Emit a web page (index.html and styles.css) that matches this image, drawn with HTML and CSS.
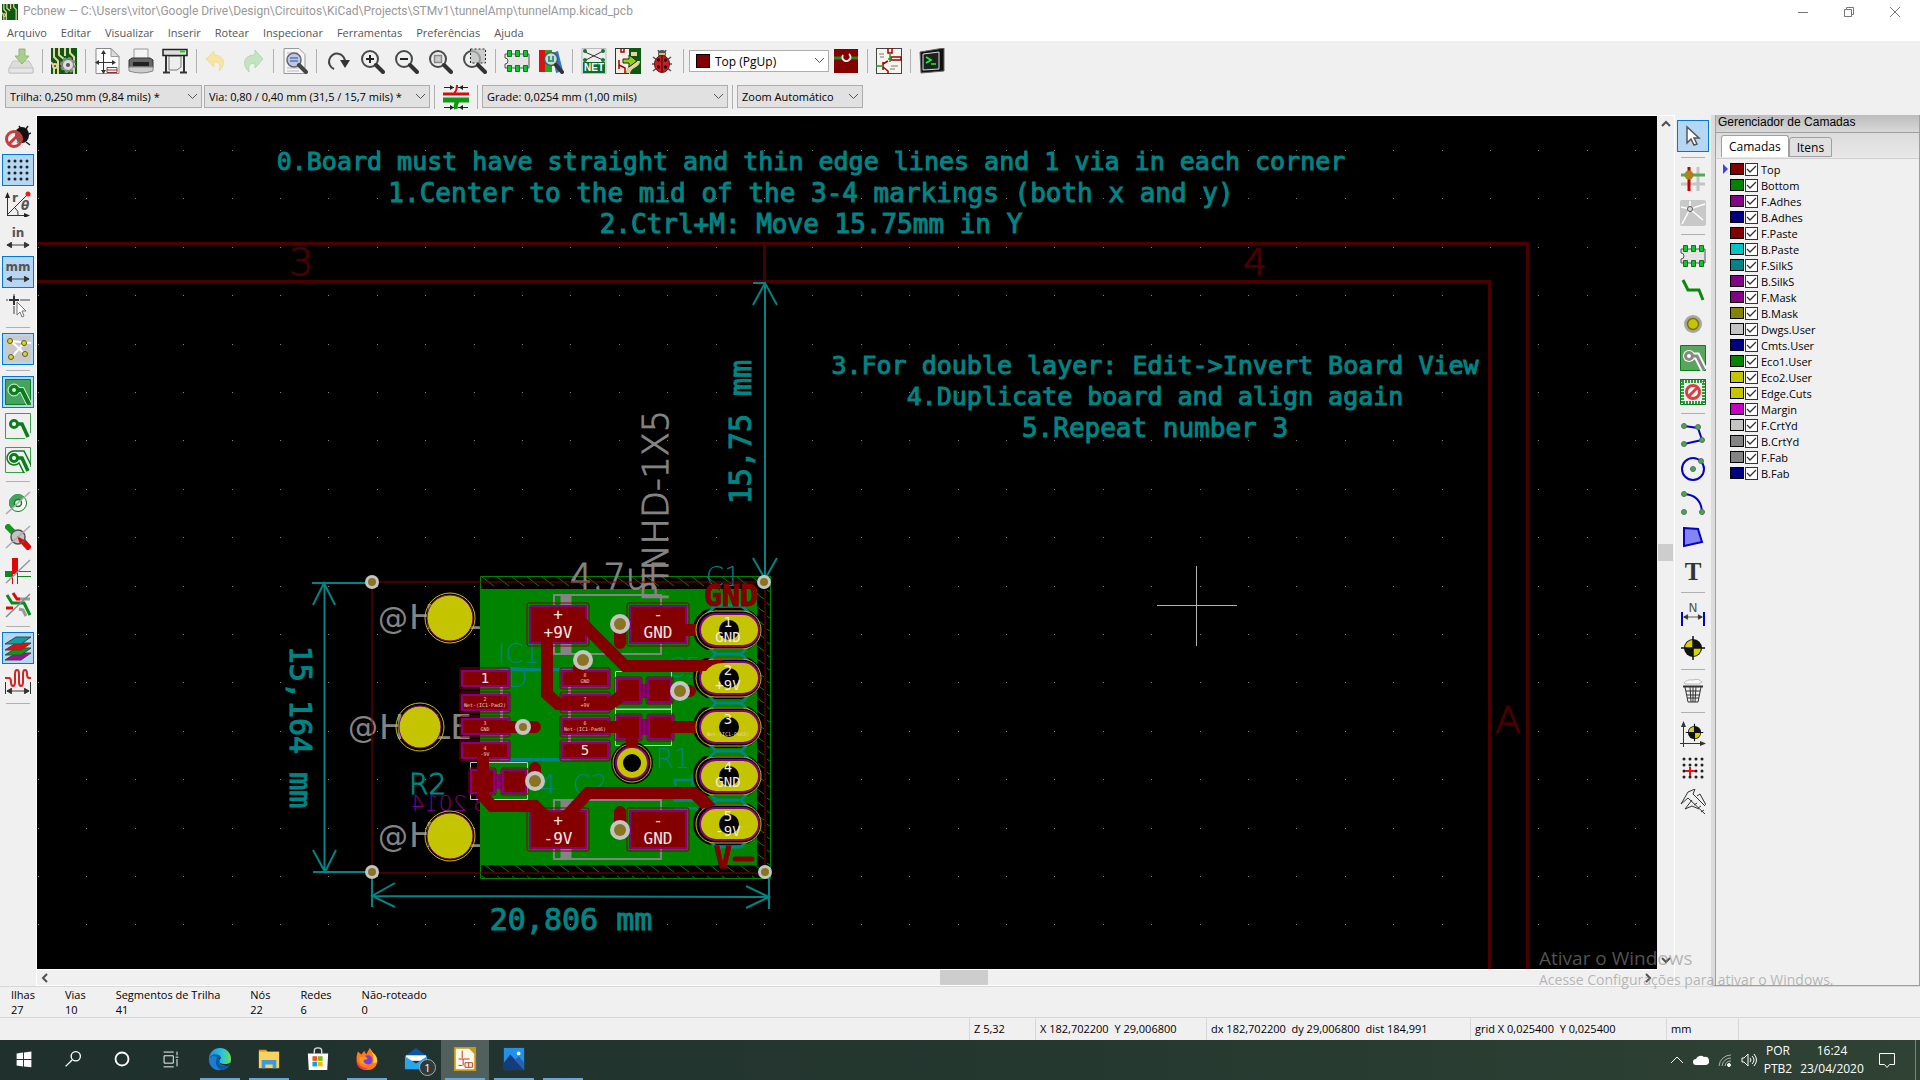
FILE: index.html
```html
<!DOCTYPE html>
<html lang="pt-BR">
<head>
<meta charset="utf-8">
<title>Pcbnew — tunnelAmp.kicad_pcb</title>
<link rel="stylesheet" href="styles.css">
</head>
<body>
<svg class="defs" aria-hidden="true">
  <defs>
    <symbol id="pcb" viewBox="0 0 26 26"><rect width="26" height="26" fill="#0b5a12"/><path d="M3 0v9l4 4v13M8 0v7l5 4M14 0v8M19 0v5l4 4v17M0 14l3 4v8" fill="none" stroke="#e6d3a0" stroke-width="2"/><circle cx="4" cy="18" r="2" fill="#0b5a12" stroke="#e6d3a0" stroke-width="2"/></symbol>
    <symbol id="lens" viewBox="0 0 26 26"><circle cx="11" cy="11" r="8" fill="#eef0f0" stroke="#4a4a4a" stroke-width="2"/><path d="M17 17l7 7" stroke="#333" stroke-width="4" stroke-linecap="round"/></symbol>
    <symbol id="chip" viewBox="0 0 26 26"><path d="M1 6h24v14H1v-4a3 3 0 0 0 0-6z" fill="#e4e4e4" stroke="#555"/><g fill="#0fc52c" stroke="#1d6b29"><path d="M3.500 2.500h4v6h-4zM11.500 2.500h4v6h-4zM19.500 2.500h4v6h-4zM3.500 17.500h4v6h-4zM11.500 17.500h4v6h-4zM19.500 17.500h4v6h-4z"/></g></symbol>
    <symbol id="target" viewBox="0 0 26 26"><circle cx="13" cy="13" r="9" fill="#111"/><path d="M13 13V5a8 8 0 0 0-8 8zM13 13v8a8 8 0 0 0 8-8z" fill="#d8d400"/><path d="M13 1v24M1 13h24" stroke="#111" stroke-width="1.500"/></symbol>
    <symbol id="schem" viewBox="0 0 26 26"><rect x=".5" y=".5" width="25" height="25" fill="#f7f4ee" stroke="#444"/><path d="M12 0v5h4V0M7 14v8M7 16l5-3M7 19l5 4v3M15 9h10v3H15z" fill="none" stroke="#a00000" stroke-width="1.500"/><path d="M14 5v9M0 18h7M12 11h4" stroke="#159a24" stroke-width="1.500"/><path d="M3 6h5M4 9h4M15 18h7M14 21h5" stroke="#777"/></symbol>
    <symbol id="arrows" viewBox="0 0 26 6"><path d="M1 3h24M6 0L1 3l5 3zM20 0l5 3-5 3z" fill="#333" stroke="#333" stroke-width="1"/></symbol>
  </defs>
</svg>

<header class="titlebar">
  <svg class="app-icon"><use href="#pcb"/></svg>
  <h1>Pcbnew — C:\Users\vitor\Google Drive\Design\Circuitos\KiCad\Projects\STMv1\tunnelAmp\tunnelAmp.kicad_pcb</h1>
  <div class="window-buttons">
    <button aria-label="Minimizar"><svg viewBox="0 0 10 10"><path d="M0 5.500h10"/></svg></button>
    <button aria-label="Restaurar"><svg viewBox="0 0 10 10"><path d="M.5 2.500h7v7h-7zM2.500 2.500v-2h7v7h-2"/></svg></button>
    <button aria-label="Fechar"><svg viewBox="0 0 10 10"><path d="M0 0l10 10M10 0L0 10"/></svg></button>
  </div>
</header>
<nav class="menubar">
  <button>Arquivo</button><button>Editar</button><button>Visualizar</button><button>Inserir</button><button>Rotear</button><button>Inspecionar</button><button>Ferramentas</button><button>Preferências</button><button>Ajuda</button>
</nav>

<div class="toolbar">
  <button class="tool" aria-label="Salvar"><svg viewBox="0 0 26 26"><path d="M5 13h16l4 7v5H1v-5z" fill="#dcdcdc" stroke="#c4c4c4"/><path d="M1 20h24v5H1z" fill="#e6e6e6" stroke="#c4c4c4"/><path d="M11 1h6v7h4l-7 8-7-8h4z" fill="#a9cf8f" stroke="#8db678"/></svg></button>
  <span class="sep"></span>
  <button class="tool" aria-label="Configurar placa"><svg viewBox="0 0 26 26"><use href="#pcb"/><circle cx="17" cy="17" r="6.500" fill="#e8e8e8" stroke="#888" stroke-width="3" stroke-dasharray="3 2"/><circle cx="17" cy="17" r="5.500" fill="#ddd" stroke="#777"/><circle cx="17" cy="17" r="2" fill="#555"/></svg></button>
  <span class="sep"></span>
  <button class="tool" aria-label="Página"><svg viewBox="0 0 26 26"><path d="M2 .5h15l8 8v17H2z" fill="#fdfdfd" stroke="#888"/><path d="M17 .5v8h8z" fill="#ddd" stroke="#999"/><path d="M2 14.500h18M9.500 3v22" stroke="#333"/><path d="M5 12l-4 2.500 4 2.500zM18 12l4 2.500-4 2.500zM7 6l2.500-4L12 6zM7 22l2.500 4 2.500-4z" fill="#333"/><path d="M13 19.500h10v5H13zM13 22h10" fill="#fff" stroke="#833"/></svg></button>
  <button class="tool" aria-label="Imprimir"><svg viewBox="0 0 26 26"><path d="M6 1h14v12H6z" fill="#f4f4f4" stroke="#999"/><path d="M1 12l3-2h18l3 2v8H1z" fill="#666" stroke="#333"/><path d="M1 19h24v4q-12 4-24 0z" fill="#ccc" stroke="#888"/><path d="M5 14h16v4H5z" fill="#222"/></svg></button>
  <button class="tool" aria-label="Plotar"><svg viewBox="0 0 26 26"><path d="M4 6v18M22 6v18M1 24.500h7M18 24.500h7" stroke="#333" stroke-width="2"/><path d="M7 8h12v11l-4 3H7z" fill="#eee" stroke="#777"/><rect x="1" y="1.500" width="24" height="6" fill="#ddd" stroke="#222" stroke-width="1.500"/><path d="M18 3.500h5" stroke="#2c2" stroke-width="2"/></svg></button>
  <span class="sep"></span>
  <button class="tool" aria-label="Desfazer"><svg viewBox="0 0 26 26"><path d="M9 3v4c11 0 12 10 5 16 2-6 1-9-5-9v5L1 11z" fill="#f6e6a4" stroke="#ecdda0"/></svg></button>
  <button class="tool" aria-label="Refazer"><svg viewBox="0 0 26 26"><path d="M16 2v5C4 7 3 17 10 24c-1-6 0-9 6-9v5l8-9z" fill="#c2e4c0" stroke="#b0d8b0"/></svg></button>
  <span class="sep"></span>
  <button class="tool" aria-label="Localizar"><svg viewBox="0 0 26 26"><path d="M2 .5h15l6 6v19H2z" fill="#f6f6f6" stroke="#999"/><path d="M5 5h11M5 8h14M5 20h12M5 23h12" stroke="#bbb"/><circle cx="12" cy="12" r="7" fill="#bcc8e6" stroke="#666" stroke-width="1.500"/><path d="M8 10h8M8 13h8" stroke="#5a74b8" stroke-width="1.500"/><path d="M17 17l7 7" stroke="#444" stroke-width="4" stroke-linecap="round"/></svg></button>
  <span class="sep"></span>
  <button class="tool" aria-label="Redesenhar"><svg viewBox="0 0 26 26"><path d="M9 21A8 8 0 1 1 20 14" fill="none" stroke="#444" stroke-width="2"/><path d="M15 12h10l-5 8z" fill="#333"/></svg></button>
  <button class="tool" aria-label="Ampliar"><svg viewBox="0 0 26 26"><use href="#lens"/><path d="M7 11h8M11 7v8" stroke="#222" stroke-width="2"/></svg></button>
  <button class="tool" aria-label="Reduzir"><svg viewBox="0 0 26 26"><use href="#lens"/><path d="M7 11h8" stroke="#222" stroke-width="2"/></svg></button>
  <button class="tool" aria-label="Ajustar"><svg viewBox="0 0 26 26"><use href="#lens"/><rect x="7.500" y="7.500" width="7" height="7" fill="#ccc" stroke="#888" stroke-width="1.500"/></svg></button>
  <button class="tool" aria-label="Zoom na seleção"><svg viewBox="0 0 26 26"><use href="#lens"/><rect x="9.500" y="1" width="15" height="14" fill="#bbb" fill-opacity=".7" stroke="#222" stroke-dasharray="2 2"/></svg></button>
  <span class="sep"></span>
  <button class="tool" aria-label="Editor de footprints"><svg><use href="#chip"/></svg></button>
  <button class="tool" aria-label="Visualizador"><svg viewBox="0 0 26 26"><path d="M1 2h6v22H1z" fill="#d11"/><path d="M7 2h7v22H7z" fill="#2a2"/><path d="M14 5l6-2 5 20-7 2z" fill="#37c"/><circle cx="13" cy="11" r="6.500" fill="#bfe0d8" stroke="#555" stroke-width="1.500"/><path d="M11 8v5h4V8" fill="none" stroke="#397" stroke-width="2"/><path d="M18 17l6 7" stroke="#333" stroke-width="4" stroke-linecap="round"/></svg></button>
  <span class="sep"></span>
  <button class="tool" aria-label="Netlist"><svg viewBox="0 0 26 26"><path d="M1 .5h24v25H1z" fill="#eee" stroke="#bbb"/><path d="M4 4l18 8M22 3L5 12" stroke="#333"/><g fill="#173"><circle cx="4" cy="3" r="2"/><circle cx="22" cy="3" r="2"/><circle cx="4" cy="12" r="2"/><circle cx="22" cy="12" r="2"/></g><rect x="2" y="14" width="22" height="11" fill="#0e6b2c"/><text class="net" x="13" y="23">NET</text></svg></button>
  <button class="tool" aria-label="Atualizar PCB"><svg viewBox="0 0 26 26"><path d="M0 0h14v26H0z" fill="#f4efe6"/><path d="M14 0h12v26H10l4-8z" fill="#0b5a12"/><path d="M13 26c0-9 10-7 10-13M16 6h6" fill="none" stroke="#e6d3a0" stroke-width="4"/><path d="M6 0v4h3V0M4 12v9M4 17l6 3v6" stroke="#a00" fill="none" stroke-width="1.500"/><path d="M8 11h6V7l8 6-8 6v-4H8z" fill="#8ad60a" stroke="#222"/><path d="M0 .5h14M.5 0v26M0 25.500h14" stroke="#333"/></svg></button>
  <button class="tool" aria-label="Verificar regras"><svg viewBox="0 0 26 26"><path d="M9 2l2 4M17 2l-2 4M4 9l4 3M22 9l-4 3M3 16h20M4 23l5-4M22 23l-5-4" stroke="#555" stroke-width="1.500"/><circle cx="13" cy="6" r="4" fill="#555"/><path d="M10 6h6" stroke="#d8c060" stroke-width="2"/><ellipse cx="13" cy="16" rx="7.500" ry="8.500" fill="#c62026" stroke="#611"/><path d="M13 8v16" stroke="#400"/><g fill="#300"><circle cx="9.500" cy="12" r="1.700"/><circle cx="16.500" cy="12" r="1.700"/><circle cx="9.500" cy="19" r="1.700"/><circle cx="16.500" cy="19" r="1.700"/></g></svg></button>
  <span class="sep"></span>
  <label class="layer-picker"><span class="swatch c-red"></span><select class="combo combo-white" aria-label="Camada ativa"><option>Top (PgUp)</option></select></label>
  <button class="tool" aria-label="Par de camadas"><svg viewBox="0 0 26 26"><rect x="1" y="1" width="24" height="24" fill="#840000"/><path d="M1 10h8M17 10h8" stroke="#1b8c1b" stroke-width="3"/><path d="M10 7a4 4 0 1 0 6-1" fill="none" stroke="#eee" stroke-width="2"/></svg></button>
  <span class="sep"></span>
  <button class="tool" aria-label="Esquemático"><svg><use href="#schem"/></svg></button>
  <span class="sep"></span>
  <button class="tool" aria-label="Console"><svg viewBox="0 0 26 26"><path d="M1 4L25 0v23l-23 2z" fill="#111" stroke="#666"/><path d="M4 6l16-2v17L4 22z" fill="#1c221c" stroke="#ddd"/><path d="M7 9l5 3-5 3M12 16h5" fill="none" stroke="#2e4" stroke-width="1.700"/></svg></button>
</div>

<div class="toolbar toolbar-options">
  <select class="combo w-track" aria-label="Trilha"><option>Trilha: 0,250 mm (9,84 mils) *</option></select>
  <select class="combo w-via" aria-label="Via"><option>Via: 0,80 / 0,40 mm (31,5 / 15,7 mils) *</option></select>
  <span class="sep"></span>
  <button class="tool" aria-label="Largura automática"><svg viewBox="0 0 26 26"><path d="M0 10h26" stroke="#d01010" stroke-width="3"/><path d="M0 16h26" stroke="#109a10" stroke-width="5"/><path d="M11 9q3-2 3-8" fill="none" stroke="#d01010" stroke-width="2"/><path d="M15 17q-3 3-2 8" fill="none" stroke="#109a10" stroke-width="4"/><path d="M1 3.500h10M15 3.500h10M1 23.500h10M15 23.500h10" stroke="#222"/><path d="M7 1l4 2.500L7 6zM20 1l-4 2.500L20 6zM7 21l4 2.500L7 26zM20 21l-4 2.500 4 2.500z" fill="#222"/></svg></button>
  <span class="sep"></span>
  <select class="combo w-grid" aria-label="Grade"><option>Grade: 0,0254 mm (1,00 mils)</option></select>
  <span class="sep"></span>
  <select class="combo w-zoom" aria-label="Zoom"><option>Zoom Automático</option></select>
</div>

<main class="workspace">
  <div class="sidebar sidebar-left">
    <button class="tool" aria-label="Verificação desligada"><svg viewBox="0 0 26 26"><path d="M14 3l2 3M23 3l-2 3M10 8l5 3M26 10l-4 2M25 22l-4-3M12 20l3-3" stroke="#222" stroke-width="1.500"/><ellipse cx="17" cy="12" rx="7" ry="8" fill="#111"/><circle cx="9" cy="16" r="7.500" fill="#fff" fill-opacity=".35" stroke="#c83c3c" stroke-width="3"/><path d="M4 21L14 11" stroke="#c83c3c" stroke-width="3"/></svg></button>
    <button class="tool on" aria-label="Grade"><svg viewBox="0 0 26 26"><path d="M4 4h19M4 10h19M4 16h19M4 22h19" stroke="#222" stroke-width="3" stroke-linecap="round" stroke-dasharray="0 6"/></svg></button>
    <button class="tool" aria-label="Coordenadas polares"><svg viewBox="0 0 26 26"><path d="M2.500 25V5M2 24.500h20M2 24L23 3" fill="none" stroke="#333"/><path d="M10 17q4 3 3 7" fill="none" stroke="#333"/><path d="M0 7l2.500-6L5 7zM19 22l6 2.500-6 2.500z" fill="#222"/><circle cx="23" cy="3" r="2.500" fill="#f01818"/><text class="glyph" x="7" y="11">r</text><text class="glyph ital" x="16" y="19">θ</text></svg></button>
    <button class="tool" aria-label="Polegadas"><svg viewBox="0 0 26 26"><text class="glyph mid" x="13" y="12">in</text><use href="#arrows" x="1" y="17" width="24" height="6"/></svg></button>
    <button class="tool on" aria-label="Milímetros"><svg viewBox="0 0 26 26"><text class="glyph mid" x="13" y="12">mm</text><use href="#arrows" x="1" y="17" width="24" height="6"/></svg></button>
    <button class="tool" aria-label="Cursor"><svg viewBox="0 0 26 26"><path d="M1 7h2M15 7h10M9 1v2M9 13v8" stroke="#999" stroke-width="2"/><path d="M4 7h10M9 3v9" stroke="#333" stroke-width="2"/><path d="M12 9v13l3-3 2 5 2-1-2-5h4z" fill="#fff" stroke="#777"/></svg></button>
    <span class="sep"></span>
    <button class="tool on" aria-label="Ratsnest"><svg viewBox="0 0 26 26"><rect width="26" height="26" rx="2" fill="#c9c9c9"/><path d="M6 5l15 14M7 21L19 7M6 5l20 2" stroke="#fff" stroke-width="2"/><g fill="#dede00" stroke="#555"><circle cx="5" cy="5" r="2.500"/><circle cx="19" cy="7" r="2.500"/><circle cx="6" cy="21" r="2.500"/><circle cx="20" cy="18" r="2.500"/></g></svg></button>
    <span class="sep"></span>
    <button class="tool on" aria-label="Zonas preenchidas"><svg viewBox="0 0 26 26"><path d="M.5.500h25v25H.5z" fill="#46a35e" stroke="#0a7d1c"/><path d="M9 11h8l7 14" fill="none" stroke="#d8ead8" stroke-width="6"/><circle cx="9" cy="11" r="6" fill="#46a35e" stroke="#d8ead8"/><path d="M12 11h5l7 14" fill="none" stroke="#0a7d1c" stroke-width="4"/><circle cx="9" cy="11" r="3.500" fill="#d8ead8" stroke="#0a7d1c" stroke-width="3"/></svg></button>
    <button class="tool" aria-label="Zonas ocultas"><svg viewBox="0 0 26 26"><path d="M20 25.500H.5V.5h25V20" fill="none" stroke="#3aa04a"/><path d="M12 11h5l6 13" fill="none" stroke="#0a7d1c" stroke-width="3.500"/><circle cx="9" cy="11" r="3.500" fill="#fff" stroke="#0a7d1c" stroke-width="3"/></svg></button>
    <button class="tool" aria-label="Contorno das zonas"><svg viewBox="0 0 26 26"><path d="M20 25.500H.5V.5h25V20" fill="none" stroke="#3aa04a"/><path d="M9 4a7 7 0 1 0 5 12l5 10M9 4h10l7 14" fill="none" stroke="#0a7d1c" stroke-width="1.500"/><path d="M12 11h5l6 13" fill="none" stroke="#0a7d1c" stroke-width="3.500"/><circle cx="9" cy="11" r="3.500" fill="#fff" stroke="#0a7d1c" stroke-width="3"/></svg></button>
    <span class="sep"></span>
    <button class="tool" aria-label="Pads"><svg viewBox="0 0 26 26"><circle cx="13" cy="13" r="8.500" fill="#fff" stroke="#0a7d1c"/><path d="M19 7A8.500 8.500 0 1 0 7 19z" fill="#46a35e"/><circle cx="13" cy="13" r="3.500" fill="#fff" stroke="#0a7d1c" stroke-width="1.500"/><path d="M1 24L25 2" stroke="#aaa" stroke-width="1.500"/></svg></button>
    <button class="tool" aria-label="Vias"><svg viewBox="0 0 26 26"><path d="M1 1l10 10" stroke="#0a9a1c" stroke-width="6"/><path d="M15 14l10 11" stroke="#dd0808" stroke-width="6"/><circle cx="13" cy="13" r="7" fill="#c4c4c4" stroke="#555" stroke-width="1.500"/><path d="M12 12l7 4-4 4z" fill="#dd0808"/><path d="M1 24L25 2" stroke="#aaa" stroke-width="1.500"/></svg></button>
    <button class="tool" aria-label="Trilhas"><svg viewBox="0 0 26 26"><path d="M0 16h8" stroke="#0a8a1c" stroke-width="6"/><path d="M10 0v16" stroke="#dd0808" stroke-width="6"/><path d="M7.500 16v10M12.500 16v10" stroke="#dd0808"/><path d="M13 13.500h13M13 18.500h13" stroke="#0a8a1c"/><path d="M1 25L25 2" stroke="#999" stroke-width="1.500"/></svg></button>
    <button class="tool" aria-label="Alto contraste"><svg viewBox="0 0 26 26"><path d="M14 7h11M14 17l4 1 3 6" fill="none" stroke="#999" stroke-width="3"/><path d="M2 3l5 8h12l6 12" fill="none" stroke="#0a8a1c" stroke-width="3"/><path d="M8 1l4 6h3M1 16h7" fill="none" stroke="#dd0808" stroke-width="3"/><path d="M1 25L25 2" stroke="#888" stroke-width="1.500"/></svg></button>
    <span class="sep"></span>
    <button class="tool on" aria-label="Camadas"><svg viewBox="0 0 26 26"><g stroke="#444"><path d="M0 25l11-7h15l-10 7z" fill="#9a109a"/><path d="M0 20l11-7h15l-10 7z" fill="#109a10"/><path d="M0 15l11-7h15l-10 7z" fill="#e01010"/><path d="M0 9l11-7h15l-10 7z" fill="#10a0a0"/></g></svg></button>
    <button class="tool" aria-label="Micro-ondas"><svg viewBox="0 0 26 26"><path d="M0 9h4q2 0 2 4t2 4 2-4V5q0-4 2-4t2 4v8q0 4 2 4t2-4V5q0-4 2-4t2 4 2 4h2" fill="none" stroke="#cf2626" stroke-width="2"/><path d="M.5 13v12M25.500 13v12" stroke="#333"/><use href="#arrows" x="1" y="19" width="24" height="6"/></svg></button>
    <span class="sep"></span>
  </div>

  <div class="canvas-frame">
    <svg class="board" viewBox="37 116 1620 853" preserveAspectRatio="xMidYMid slice" role="img" aria-label="Placa tunnelAmp">
      <defs>
        <pattern id="dots" x="38" y="150" width="242" height="242" patternUnits="userSpaceOnUse">
          <path d="M0 .5h242M0 48.500h242M0 97.500h242M0 145.500h242M0 194.500h242" stroke="#848484" stroke-dasharray="1 47 1 48 1 47 1 48 1 47"/>
        </pattern>
        <pattern id="hatch" width="15" height="13" x="480" y="576" patternUnits="userSpaceOnUse"><path d="M2 1l12 9" stroke="#008400"/></pattern>
        <g id="via"><circle r="10" fill="#c4c4c4"/><circle r="6" fill="#8a7422"/></g>
        <g id="via-small"><circle r="7" fill="#c4c4c4"/><circle r="4" fill="#8a7422"/></g>
        <g id="pad-ic"><rect x="-2" y="-3" width="50" height="21" rx="2" class="outline"/><rect width="46" height="15" class="copper"/></g>
        <g id="pad-big"><rect x="-3" y="-3" width="62" height="43" rx="2" class="outline"/><rect width="56" height="37" class="copper"/></g>
        <g id="pad-sm"><rect x="-2" y="-2" width="27" height="27" rx="2" class="outline"/><rect width="23" height="23" class="copper"/></g>
        <g id="pin-clear"><rect x="-35" y="-22" width="68" height="43" rx="21" fill="#000"/></g>
        <g id="pin"><rect x="-32" y="-19" width="65" height="38" rx="19" fill="#000" stroke="#c4c400"/><rect x="-28" y="-16" width="59" height="32" rx="16" fill="#c4c400" stroke="#840084" stroke-width="2"/><circle cx="1" r="10"/></g>
        <g id="hole"><circle r="25" fill="none" stroke="#c4c400"/><circle r="23" fill="#c4c400" stroke="#840084"/></g>
        <path id="link" d="M-22-10L-12 0H13L23-10M-22 10L-12 0M13 0l10 10"/>
      </defs>
      <rect x="37" y="116" width="1620" height="853"/>
      <rect x="37" y="116" width="1620" height="853" fill="url(#dots)"/>

      <g fill="none" stroke="#480000" stroke-width="3">
        <path d="M37 243.500H1527.500V969M37 281.500H1489.500V969M764.500 243v38"/>
      </g>
      <g class="frame-text"><text x="301" y="275">3</text><text x="1255" y="275">4</text><text x="1508" y="733">A</text></g>

      <g class="note">
        <text class="note-small" x="811" y="170">0.Board must have straight and thin edge lines and 1 via in each corner</text>
        <text x="811" y="202">1.Center to the mid of the 3-4 markings (both x and y)</text>
        <text x="811" y="233">2.Ctrl+M: Move 15.75mm in Y</text>
        <text class="note-small" x="1155" y="374">3.For double layer: Edit-&gt;Invert Board View</text>
        <text class="note-small" x="1155" y="405">4.Duplicate board and align again</text>
        <text x="1155" y="437">5.Repeat number 3</text>
      </g>

      <g class="fab">
        <text x="378" y="629" class="at">@</text><text x="409" y="629">HOL</text>
        <text x="348" y="738" class="at">@</text><text x="379" y="739">HOLE</text>
        <text x="378" y="847" class="at">@</text><text x="409" y="847">HOL</text>
      </g>
      <text class="mirrored" transform="translate(488 811) scale(-1 1)">B 2014</text>
      <text class="ref" x="409" y="794">R2</text>

      <path d="M480.500 576.500h290v302h-290z" fill="#000"/>
      <path d="M480.500 576.500h290v302h-290z" fill="url(#hatch)" stroke="#008400"/>
      <path d="M480 589h277v276H480z" fill="#008400"/>

      <g stroke="#848484" fill="none" stroke-width="2">
        <path d="M554 595h107v59H554zM554 800h107v59H554z"/>
        <path d="M566 595v59M566 800v59" stroke-width="11"/>
        <path d="M501.500 686v60M569.500 686v60" stroke-width="3"/>
      </g>
      <g class="thin">
        <text x="570" y="589">4.7uF</text>
        <text transform="translate(668 602) rotate(-90)">PINHD-1X5</text>
      </g>
      <g class="ref-thin">
        <text x="498" y="663">IC1</text><text x="508" y="687">D</text><text x="706" y="586">C1</text><text x="667" y="677">C5</text>
        <text x="540" y="794">4</text><text x="573" y="794">C2</text><text x="656" y="768">R1</text>
        <text transform="translate(694 812) rotate(-90)" class="heavy">JP1</text>
      </g>
      <path d="M500 669.500h71M500 759.500h71" stroke="#008484" stroke-width="3"/>

      <g><use href="#pin-clear" x="728" y="630"/><use href="#pin-clear" x="728" y="678"/><use href="#pin-clear" x="728" y="727"/><use href="#pin-clear" x="728" y="776"/><use href="#pin-clear" x="728" y="824"/></g>
      <path d="M750 650h7v8h-7zM750 699h7v8h-7zM750 748h7v8h-7zM750 796h7v8h-7zM704 650h40v8h-40zM704 699h40v8h-40zM704 748h40v8h-40zM704 796h40v8h-40z" fill="#008400"/>
      <g fill="none" stroke="#008484" stroke-width="3">
        <path d="M706 615l10-10h25l10 10M706 837l10 10h25l10-10"/>
        <use href="#link" x="728" y="654"/><use href="#link" x="728" y="703"/><use href="#link" x="728" y="751"/><use href="#link" x="728" y="800"/>
      </g>
      <g class="brand-red"><text x="704" y="606">GND</text><text x="714" y="868">V</text></g>
      <path d="M735 859h17" stroke="#840000" stroke-width="5" stroke-linecap="round"/>

      <path d="M372 582H765V873H372z" fill="none" stroke="#840000"/>

      <g>
        <use href="#pad-ic" x="462" y="671"/><use href="#pad-ic" x="462" y="695"/><use href="#pad-ic" x="462" y="719"/><use href="#pad-ic" x="462" y="743"/>
        <use href="#pad-ic" x="562" y="671"/><use href="#pad-ic" x="562" y="695"/><use href="#pad-ic" x="562" y="719"/><use href="#pad-ic" x="562" y="743"/>
        <use href="#pad-big" x="530" y="606"/><use href="#pad-big" x="630" y="606"/><use href="#pad-big" x="530" y="811"/><use href="#pad-big" x="630" y="811"/>
        <g fill="none" stroke="#c4c4c4"><path d="M615.500 672v37h56v-37M615.500 671.500h20M615.500 745.500h56v-36h-56zM470.500 762.500h57v37h-57z"/></g>
        <path d="M639 684h9v14h-9zM639 719h10v16h-10zM495 774h7v15h-7z" fill="#840084"/>
        <use href="#pad-sm" x="617" y="679"/><use href="#pad-sm" x="648" y="679"/><use href="#pad-sm" x="617" y="716"/><use href="#pad-sm" x="649" y="716"/><use href="#pad-sm" x="471" y="770"/><use href="#pad-sm" x="503" y="770"/>
      </g>

      <g class="track">
        <path d="M547 635v59l11 10h52l14-10"/><path d="M580 621l45 45h98l6 7"/><path d="M686 630h16M620 624v19M583 660l-4 8v9M508 727h27M608 727h20M632 727v26M664 727h38M680 691h10"/>
        <path d="M483 752v44l9 10h43l12 12M566 817l22-24h106l17 17M535 781v-13M620 830v-18"/>
      </g>
      <circle cx="632" cy="763" r="21"/><circle cx="632" cy="763" r="19" fill="none" stroke="#c4c400"/><circle cx="632" cy="763" r="16" fill="#c4c400" stroke="#840084" stroke-width="2"/><circle cx="632" cy="763" r="9"/>
      <path d="M632 735v12" stroke="#840000" stroke-width="12"/>
      <use href="#via" x="620" y="624"/><use href="#via" x="583" y="660"/><use href="#via" x="680" y="691"/><use href="#via" x="535" y="781"/><use href="#via" x="620" y="830"/>
      <circle cx="523" cy="727" r="8" fill="#c4c4c4"/><circle cx="523" cy="727" r="4" fill="#8a7422"/>

      <use href="#pin" x="728" y="630"/><use href="#pin" x="728" y="678"/><use href="#pin" x="728" y="727"/><use href="#pin" x="728" y="776"/><use href="#pin" x="728" y="824"/>
      <path d="M692 660h28q4 0 6 3-14-1-20 8h-14zM692 793l10 12q4 6 8 2l6-2-14-14z" fill="#840000"/>
      <use href="#hole" x="450" y="618"/><circle cx="420" cy="727" r="24" fill="none" stroke="#c4c400"/><circle cx="420" cy="727" r="21" fill="#c4c400" stroke="#840084"/><use href="#hole" x="450" y="836"/>

      <g class="pad-text">
        <text x="558" y="620">+</text><text x="558" y="638">+9V</text><text x="658" y="620">-</text><text x="658" y="638">GND</text>
        <text x="558" y="826">+</text><text x="558" y="844">-9V</text><text x="658" y="826">-</text><text x="658" y="844">GND</text>
      </g>
      <g class="pad-text pin-text">
        <text x="728" y="627">1</text><text x="728" y="642">GND</text><text x="728" y="675">2</text><text x="728" y="690">+9V</text><text x="728" y="724">3</text><text x="728" y="772">4</text><text x="728" y="787">GND</text><text x="728" y="821">5</text><text x="728" y="836">-9V</text>
        <text x="485" y="683">1</text><text x="585" y="755">5</text>
      </g>
      <g class="tiny-text">
        <text x="485" y="701">2</text><text x="485" y="707">Net-(IC1-Pad2)</text><text x="485" y="725">3</text><text x="485" y="731">GND</text><text x="485" y="750">4</text><text x="485" y="756">-9V</text>
        <text x="585" y="677">8</text><text x="585" y="683">GND</text><text x="585" y="701">7</text><text x="585" y="707">+9V</text><text x="585" y="725">6</text><text x="585" y="731">Net-(IC1-Pad6)</text><text x="728" y="736">Net-(IC1-Pad3)</text>
      </g>

      <g fill="none" stroke="#008484" stroke-width="2">
        <path d="M324.500 583v289M312 583h60M313 872h59M313 605l11-22 11 22M313 850l12 22 11-22"/>
        <path d="M372 896l397 1M372 879v28M769 878v31M395 883l-23 13 23 11M746 886l23 11-23 11"/>
        <path d="M765 283v296M753 283h13M753 305l12-22 12 22M753 558l12 21 12-21"/>
      </g>
      <g class="dimension">
        <text transform="translate(290 727) rotate(90)">15,164 mm</text>
        <text x="571" y="930">20,806 mm</text>
        <text transform="translate(751 432) rotate(-90)">15,75 mm</text>
      </g>
      <use href="#via-small" x="372" y="582"/><use href="#via-small" x="372" y="872"/><use href="#via-small" x="764" y="582"/><use href="#via-small" x="765" y="872"/>
      <path d="M1157 605.500h80M1196.500 566v80" stroke="#b4b4b4"/>
    </svg>
    <div class="scroll scroll-v">
      <svg viewBox="0 0 17 17"><path d="M5 10l4-4 4 4"/></svg><i class="gap-a"></i><b></b><i class="gap-b"></i><svg viewBox="0 0 17 17"><path d="M5 6l4 4 4-4"/></svg>
    </div>
    <div class="scroll scroll-h">
      <svg viewBox="0 0 17 17"><path d="M10 4L6 8l4 4"/></svg><i class="gap-a"></i><b></b><i class="gap-b"></i><svg viewBox="0 0 17 17"><path d="M6 4l4 4-4 4"/></svg>
    </div>
  </div>

  <div class="sidebar sidebar-right">
    <button class="tool on" aria-label="Selecionar"><svg viewBox="0 0 26 26"><path d="M7 4v16l4-4 3 6 3-1-3-6h5z" fill="#fff" stroke="#555" stroke-width="1.500"/></svg></button>
    <span class="sep"></span>
    <button class="tool" aria-label="Realçar rede"><svg viewBox="0 0 26 26"><path d="M18 1v24M1 18h24" stroke="#c4c4c4" stroke-width="3"/><path d="M1 9h24" stroke="#55a85a" stroke-width="3"/><path d="M9 1v24" stroke="#c00000" stroke-width="3"/><circle cx="9" cy="9" r="4.500" fill="#a8861c"/></svg></button>
    <button class="tool" aria-label="Ratsnest local"><svg viewBox="0 0 26 26"><rect width="26" height="26" rx="2" fill="#c8c8c8"/><path d="M10 9L2 24M10 9l13 11M10 9l15-5M10 9L1 7M10 9V1" stroke="#fff" stroke-width="1.500"/><circle cx="10" cy="9" r="2.500" fill="#ddd" stroke="#555"/></svg></button>
    <span class="sep"></span>
    <button class="tool" aria-label="Adicionar footprint"><svg><use href="#chip"/></svg></button>
    <button class="tool" aria-label="Rotear trilha"><svg viewBox="0 0 26 26"><path d="M3 3l5 10h11l4 10" fill="none" stroke="#0a8a0a" stroke-width="3"/></svg></button>
    <button class="tool" aria-label="Adicionar via"><svg viewBox="0 0 26 26"><circle cx="13" cy="13" r="9" fill="#a6a6a6"/><circle cx="13" cy="13" r="5.500" fill="#c8c400" stroke="#767600" stroke-width="1.500"/></svg></button>
    <button class="tool" aria-label="Adicionar zona"><svg viewBox="0 0 26 26"><path d="M.5.500h25v25H.5z" fill="#5aa55e" stroke="#0a7d1c"/><path d="M9 11h8l7 14" fill="none" stroke="#fff" stroke-width="7"/><circle cx="9" cy="11" r="6" fill="#fff"/><path d="M12 11h5l7 14" fill="none" stroke="#888" stroke-width="3"/><circle cx="9" cy="11" r="3.500" fill="#fff" stroke="#888" stroke-width="3"/></svg></button>
    <button class="tool" aria-label="Área proibida"><svg viewBox="0 0 26 26"><rect x="2" y="2" width="22" height="22" fill="#eee" stroke="#2b9a3b" stroke-width="4" stroke-dasharray="2 1"/><path d="M.5.500h25v25H.5z" fill="none" stroke="#0a7d1c"/><circle cx="13" cy="13" r="6.500" fill="#fff" stroke="#d84040" stroke-width="3"/><path d="M9 17l8-8" stroke="#d84040" stroke-width="3"/></svg></button>
    <span class="sep"></span>
    <button class="tool" aria-label="Linha"><svg viewBox="0 0 26 26"><path d="M4 4l14 2 4 12-18 4" fill="none" stroke="#0404c0" stroke-width="2"/><g fill="#3cb043" stroke="#666"><circle cx="4" cy="4" r="2.500"/><circle cx="18" cy="5" r="2.500"/><circle cx="22" cy="18" r="2.500"/><circle cx="4" cy="22" r="2.500"/></g></svg></button>
    <button class="tool" aria-label="Círculo"><svg viewBox="0 0 26 26"><circle cx="13" cy="13" r="11" fill="none" stroke="#0404c0" stroke-width="2"/><g fill="#3cb043" stroke="#666"><circle cx="13" cy="13" r="2.500"/><circle cx="21" cy="5" r="2.500"/></g></svg></button>
    <button class="tool" aria-label="Arco"><svg viewBox="0 0 26 26"><path d="M4 4q17 1 18 18" fill="none" stroke="#0404c0" stroke-width="2"/><g fill="#3cb043" stroke="#666"><circle cx="4" cy="4" r="2.500"/><circle cx="4" cy="22" r="2.500"/><circle cx="22" cy="22" r="2.500"/></g></svg></button>
    <button class="tool" aria-label="Polígono"><svg viewBox="0 0 26 26"><path d="M4 4l14 1 4 13-18 4z" fill="#8484f4" stroke="#0404c0" stroke-width="2"/></svg></button>
    <button class="tool" aria-label="Texto"><svg viewBox="0 0 26 26"><text class="big-t" x="13" y="22">T</text></svg></button>
    <span class="sep"></span>
    <button class="tool" aria-label="Dimensão"><svg viewBox="0 0 26 26"><path d="M2 11v14M24 11v14" stroke="#0404c0" stroke-width="2"/><use href="#arrows" x="3" y="13" width="20" height="6"/><text class="glyph plain mid" x="13" y="11">N</text></svg></button>
    <button class="tool" aria-label="Alvo"><svg><use href="#target"/></svg></button>
    <span class="sep"></span>
    <button class="tool" aria-label="Apagar"><svg viewBox="0 0 26 26"><path d="M4 5q3-4 9-3 6-2 9 2l-3 2H6z" fill="#fafafa" stroke="#bbb"/><path d="M3 8.500h20" stroke="#333" stroke-width="2"/><path d="M5 9l3 15h10l3-15M10 9l1 15M13 9v15M16 9l-1 15M6 13h14M7 17h13M7 20h12" fill="none" stroke="#333"/></svg></button>
    <span class="sep"></span>
    <button class="tool" aria-label="Origem de furação"><svg viewBox="0 0 26 26"><path d="M3.500 26V3M0 22.500h22" stroke="#333"/><path d="M1 6l2.500-6L6 6zM20 20l6 2.500-6 2.500z" fill="#333"/><use href="#target" x="5" y="2" width="19" height="19"/></svg></button>
    <button class="tool" aria-label="Origem da grade"><svg viewBox="0 0 26 26"><path d="M4 4h19M4 10h19M4 16h19M4 22h19" stroke="#222" stroke-width="3" stroke-linecap="round" stroke-dasharray="0 6"/><path d="M5 16h10M10 12v9" stroke="#e01818" stroke-width="2"/></svg></button>
    <button class="tool" aria-label="Medir"><svg viewBox="0 0 26 26"><path d="M1 15L8 3l7-3-2 5 12 12M1 15l7-6 17 16M5 20l7-3 7 3M5 20l7-9M17 7l3-2 6 11M14 16l3-2M18 19l3-2M21 23l3-2" fill="none" stroke="#333"/></svg></button>
  </div>

  <aside class="dock">
    <h2>Gerenciador de Camadas</h2>
    <div class="tabs"><button class="active">Camadas</button><button>Itens</button></div>
    <ul class="layers">
      <li class="current"><label><span class="swatch c-red"></span><input type="checkbox" checked>Top</label></li>
      <li><label><span class="swatch c-green"></span><input type="checkbox" checked>Bottom</label></li>
      <li><label><span class="swatch c-purple"></span><input type="checkbox" checked>F.Adhes</label></li>
      <li><label><span class="swatch c-navy"></span><input type="checkbox" checked>B.Adhes</label></li>
      <li><label><span class="swatch c-red"></span><input type="checkbox" checked>F.Paste</label></li>
      <li><label><span class="swatch c-cyan"></span><input type="checkbox" checked>B.Paste</label></li>
      <li><label><span class="swatch c-teal"></span><input type="checkbox" checked>F.SilkS</label></li>
      <li><label><span class="swatch c-purple"></span><input type="checkbox" checked>B.SilkS</label></li>
      <li><label><span class="swatch c-purple"></span><input type="checkbox" checked>F.Mask</label></li>
      <li><label><span class="swatch c-olive"></span><input type="checkbox" checked>B.Mask</label></li>
      <li><label><span class="swatch c-silver"></span><input type="checkbox" checked>Dwgs.User</label></li>
      <li><label><span class="swatch c-navy"></span><input type="checkbox" checked>Cmts.User</label></li>
      <li><label><span class="swatch c-green"></span><input type="checkbox" checked>Eco1.User</label></li>
      <li><label><span class="swatch c-yellow"></span><input type="checkbox" checked>Eco2.User</label></li>
      <li><label><span class="swatch c-yellow"></span><input type="checkbox" checked>Edge.Cuts</label></li>
      <li><label><span class="swatch c-magenta"></span><input type="checkbox" checked>Margin</label></li>
      <li><label><span class="swatch c-silver"></span><input type="checkbox" checked>F.CrtYd</label></li>
      <li><label><span class="swatch c-gray"></span><input type="checkbox" checked>B.CrtYd</label></li>
      <li><label><span class="swatch c-gray"></span><input type="checkbox" checked>F.Fab</label></li>
      <li><label><span class="swatch c-navy"></span><input type="checkbox" checked>B.Fab</label></li>
    </ul>
  </aside>
</main>

<dl class="message-panel">
  <div><dt>Ilhas</dt><dd>27</dd></div><div><dt>Vias</dt><dd>10</dd></div><div><dt>Segmentos de Trilha</dt><dd>41</dd></div><div><dt>Nós</dt><dd>22</dd></div><div><dt>Redes</dt><dd>6</dd></div><div><dt>Não-roteado</dt><dd>0</dd></div>
</dl>
<footer class="statusbar"><span></span><span>Z 5,32</span><span>X 182,702200&nbsp; Y 29,006800</span><span>dx 182,702200&nbsp; dy 29,006800&nbsp; dist 184,991</span><span>grid X 0,025400&nbsp; Y 0,025400</span><span>mm</span><span></span></footer>

<div class="watermark"><p>Ativar o Windows</p><p>Acesse Configurações para ativar o Windows.</p></div>

<div class="taskbar">
  <button aria-label="Iniciar"><svg viewBox="0 0 26 26"><path d="M5 7l7-1v7H5zM13 6l8-1v8h-8zM5 14h7v7l-7-1zM13 14h8v8l-8-1z" fill="#fff"/></svg></button>
  <button aria-label="Pesquisar"><svg viewBox="0 0 26 26"><path d="M5 21l7-7" stroke="#fff" stroke-width="1.500"/><circle cx="16" cy="10" r="5" fill="none" stroke="#fff" stroke-width="1.500"/></svg></button>
  <button aria-label="Cortana"><svg viewBox="0 0 26 26"><circle cx="13" cy="13" r="7" fill="none" stroke="#fff" stroke-width="2"/></svg></button>
  <button aria-label="Visão de tarefas"><svg viewBox="0 0 26 26"><path d="M5.500 9.500h10v8h-10zM5 5.500h11M5 21.500h11M19.500 5v4M19.500 13v8M18 11h3" fill="none" stroke="#fff"/></svg></button>
  <button class="open" aria-label="Edge"><svg viewBox="0 0 26 26"><defs><linearGradient id="eg" x2="1" y2="0"><stop stop-color="#1b8fe0"/><stop offset=".6" stop-color="#2cc4d8"/><stop offset="1" stop-color="#6fdc4c"/></linearGradient></defs><circle cx="13" cy="13" r="12" fill="url(#eg)"/><path d="M1 13c1-6 11-7 13-2 0 3-2 2-2 5 0 4 7 6 12 3-3 6-10 7-15 5S1 18 1 13z" fill="#0c59a4"/><path d="M10 12c-2 2-3 9 4 13C5 26 1 19 1 13c2-4 7-4 9-1z" fill="#1a7fd4"/><path d="M13 11c1 2-2 3 0 6 3 2 8 2 11 0l-1 3c-5 2-12-1-11-5z" fill="#22332f"/></svg></button>
  <button class="open" aria-label="Explorador"><svg viewBox="0 0 26 26"><path d="M2 3h8l2 3H2z" fill="#e09a10"/><path d="M2 5h22v18H2z" fill="#fbd35c"/><path d="M5 23v-9h16v9h-4v-4H9v4z" fill="#3a9be0"/></svg></button>
  <button aria-label="Store"><svg viewBox="0 0 26 26"><path d="M9 7V4q0-3 4-3t4 3v3" fill="none" stroke="#ddd" stroke-width="1.500"/><path d="M2 7h22l-1 18H3z" fill="#fff"/><path d="M7 10h5v5H7z" fill="#f25022"/><path d="M13 10h5v5h-5z" fill="#7fba00"/><path d="M7 16h5v5H7z" fill="#00a4ef"/><path d="M13 16h5v5h-5z" fill="#ffb900"/></svg></button>
  <button class="open" aria-label="Firefox"><svg viewBox="0 0 26 26"><path d="M3 5l4 3 3-4 2 4 4-7 3 5q6 4 5 11-2 8-11 8T2 17Q1 10 3 5z" fill="#ff7a1a"/><path d="M16 1l3 5q5 4 5 10l-4 2V10z" fill="#ffd33c"/><path d="M2 15q4 9 12 8-3 3-8 0t-4-8z" fill="#f0305a"/><circle cx="14" cy="14" r="5" fill="#7a3be0"/><path d="M5 11l6-1 3 3-5 1q0 4 5 5-7 1-9-3z" fill="#ff9a1a"/></svg></button>
  <button aria-label="E-mail"><svg viewBox="0 0 26 26"><path d="M1 10L13 1l12 9v4H1z" fill="#0d57a8"/><path d="M2 9h22v6H2z" fill="#fff"/><path d="M1 10l12 8 12-8v14H1z" fill="#2aa4ea"/></svg><span class="badge">1</span></button>
  <button class="open active" aria-label="Pcbnew"><svg viewBox="0 0 26 26"><path d="M2 1h16l6 6v18H2z" fill="#fbf5ea" stroke="#c79a16" stroke-width="2"/><path d="M17 0l8 8V0z" fill="#c79a16"/><path d="M10 4v8M6 13h5v7M11 13h7M10 20H6M13 17h8v5h-8zM17 17v5" fill="none" stroke="#b0381c"/></svg></button>
  <button class="open" aria-label="Fotos"><svg viewBox="0 0 26 26"><path d="M2 1h22v24H2z" fill="#2391e8"/><path d="M2 17l7-9 15 17H2z" fill="#163c7c"/><path d="M14 14l4-4 6 7v8z" fill="#2264b4"/><circle cx="18" cy="7" r="2" fill="#fff"/></svg></button>
  <button class="open" aria-label="Janela"></button>
  <div class="tray">
    <button aria-label="Ícones ocultos"><svg viewBox="0 0 16 16"><path d="M2 11l6-6 6 6"/></svg></button>
    <button aria-label="OneDrive"><svg viewBox="0 0 16 16"><path d="M3 13a3 3 0 0 1 0-6 5 5 0 0 1 8-2 4 4 0 0 1 2 8z" fill="#fff" stroke="none"/></svg></button>
    <button aria-label="Rede"><svg viewBox="0 0 16 16"><path d="M2 14A12 12 0 0 1 14 3M5 14a9 9 0 0 1 9-8M8 14a6 6 0 0 1 6-5" opacity=".6"/><circle cx="12" cy="13" r="1.500" fill="#fff"/></svg></button>
    <button aria-label="Volume"><svg viewBox="0 0 16 16"><path d="M1 6h2l4-4v12l-4-4H1zM9 6q2 2 0 4M11 4q4 4 0 8M13 2q5 6 0 12"/></svg></button>
    <div class="lang">POR<br>PTB2</div>
    <div class="clock">16:24<br>23/04/2020</div>
    <button aria-label="Notificações"><svg viewBox="0 0 16 16"><path d="M.5 1.500h15v11h-5l-2.500 3-2.500-3h-5z"/></svg></button>
    <span class="peek"></span>
  </div>
</div>
</body>
</html>
```
FILE: styles.css
```css
* { box-sizing: border-box; }
html, body { height: 100%; }
body {
  margin: 0;
  display: flex;
  flex-direction: column;
  overflow: hidden;
  background: #f0f0f0;
  color: #000;
  font: 11px/15px "Open Sans", "Noto Sans", sans-serif;
}
h1, h2, p, ul, dl, dd { margin: 0; padding: 0; }
button { border: 0; padding: 0; background: none; color: inherit; font: inherit; }
.defs { position: absolute; width: 0; height: 0; }

/* title and menu */
.titlebar { display: flex; align-items: center; height: 23px; padding: 0 2px; background: #fff; color: #999; flex: none; }
.app-icon { width: 16px; height: 16px; margin-right: 5px; }
.titlebar h1 { flex: 1; font: 400 12px/15px Roboto, "Open Sans", sans-serif; }
.window-buttons { display: flex; }
.window-buttons button { width: 46px; height: 20px; display: grid; place-items: center; }
.window-buttons svg { width: 10px; height: 10px; fill: none; stroke: #777; }
.menubar { display: flex; gap: 14px; height: 18px; padding-left: 7px; background: #fff; color: #555; flex: none; }
.menubar button { height: 18px; }

/* toolbars */
.toolbar { display: flex; align-items: center; height: 40px; padding-left: 4px; flex: none; }
.toolbar-options { height: 34px; padding: 0 0 3px 5px; }
.tool { width: 34px; height: 34px; display: grid; place-items: center; flex: none; }
.tool svg { width: 26px; height: 26px; display: block; }
.toolbar-options .tool { height: 30px; }
.toolbar .sep { flex: none; width: 1px; height: 24px; margin: 0 4px; background: #b0b0b0; }
.combo {
  appearance: none;
  height: 23px;
  padding: 0 20px 0 4px;
  border: 1px solid #adadad;
  border-radius: 0;
  background: #e1e1e1 url("data:image/svg+xml,%3Csvg xmlns='http://www.w3.org/2000/svg' width='9' height='6'%3E%3Cpath d='M0 0l4.500 4.500L9 0' fill='none' stroke='%23555'/%3E%3C/svg%3E") no-repeat right 4px center;
  color: #000;
  font: inherit;
}
.w-track { width: 197px; margin-right: 2px; }
.w-via { width: 226px; }
.w-grid { width: 246px; }
.w-zoom { width: 126px; }
.layer-picker { position: relative; width: 140px; margin-left: 1px; }
.layer-picker .swatch { position: absolute; left: 7px; top: 4px; height: 14px; }
.combo-white { width: 100%; height: 22px; padding-left: 25px; background-color: #fff; font-size: 12px; }

.net { font: bold 10px "Liberation Sans", sans-serif; fill: #fff; text-anchor: middle; }
.glyph { font: bold 12px "DejaVu Sans", sans-serif; fill: #555; }
.glyph.mid { text-anchor: middle; }
.glyph.ital { font-style: italic; }
.glyph.plain { font-weight: 400; }
.big-t { font: bold 25px "Liberation Serif", serif; fill: #333; text-anchor: middle; }

/* workspace */
.workspace { flex: 1; min-height: 0; display: flex; }
.sidebar { flex: none; display: flex; flex-direction: column; align-items: center; padding-top: 4px; }
.sidebar .tool { width: 32px; margin: 1px 0; height: 32px; border: 1px solid transparent; }
.sidebar .tool.on { background: #b5d7f3; border-color: #0078d7; }
.sidebar .sep { flex: none; width: 24px; height: 1px; margin: 4px 0; background: #b0b0b0; }
.sidebar-left { width: 36px; }
.sidebar-right { width: 36px; }
.canvas-frame {
  flex: 1;
  min-width: 0;
  display: grid;
  grid-template: minmax(0, 1fr) 16px / minmax(0, 1fr) 17px;
  border: 1px solid #fff;
}
.board { width: 100%; height: 100%; display: block; background: #000; }
.scroll { display: flex; }
.scroll svg { width: 17px; height: 17px; fill: none; stroke: #505050; stroke-width: 2; flex: none; }
.scroll b { background: #cdcdcd; }
.scroll-v { flex-direction: column; }
.scroll-v b { height: 17px; margin: 0 1px; }
.scroll-v .gap-a { flex: 411; }
.scroll-v .gap-b { flex: 391; }
.scroll-h { border-top: 1px solid #fff; }
.scroll-h b { width: 48px; }
.scroll-h .gap-a { flex: 886; }
.scroll-h .gap-b { flex: 652; }

/* board text */
.board text { font-family: "DejaVu Sans Mono", monospace; }
.board .frame-text text { font: 200 38px "DejaVu Sans", sans-serif; fill: #480000; stroke: #480000; text-anchor: middle; }
.note text { font-size: 26px; fill: #008484; stroke: #008484; text-anchor: middle; }
.note .note-small { font-size: 25px; }
.dimension text { font-size: 30px; fill: #008484; stroke: #008484; text-anchor: middle; }
.board .fab text { font: 34px "DejaVu Sans", sans-serif; fill: #848484; }
.board .fab .at { font-size: 30px; }
.board .thin text { font: 200 35px "DejaVu Sans", sans-serif; fill: #848484; stroke: #848484; }
.board .ref { font: 200 28px "DejaVu Sans", sans-serif; fill: #008484; stroke: #008484; }
.board .ref-thin text { font: 200 26px "DejaVu Sans", sans-serif; fill: #008484; }
.board .ref-thin .heavy { font-weight: 400; }
.board .mirrored { font: 200 22px "DejaVu Sans", sans-serif; fill: #840084; }
.brand-red text { font-size: 30px; font-weight: 700; fill: #840000; stroke: #840000; }
.pad-text text { font-size: 16px; fill: #f4e8e8; text-anchor: middle; }
.pin-text text { font-size: 14px; }
.tiny-text text { font-size: 5px; fill: #e8d0d0; text-anchor: middle; }
.copper { fill: #840000; stroke: #840084; stroke-width: 2; }
.outline { fill: none; stroke: #840000; }
.track { fill: none; stroke: #840000; stroke-width: 12; stroke-linecap: round; }

/* layer manager */
.dock { width: 209px; flex: none; border: solid #a0a0a0; border-width: 0 1px 1px; border-left: 4px solid #dcdcdc; }
.dock h2 { height: 17px; padding-left: 2px; background: linear-gradient(#bcbcbc, #d8d8d8); font: 12px/15px "Liberation Sans", sans-serif; border-left: 1px solid #a0a0a0; }
.tabs { display: flex; align-items: flex-end; height: 27px; padding: 0 6px 1px 5px; border: solid #a0a0a0; border-width: 1px 0 1px 1px; border-bottom-color: #d0d0d0; background: linear-gradient(#dcdcdc, #e8e8e8); }
.tabs button { height: 20px; padding: 0 7px; border: 1px solid #a0a0a0; background: #e0e0e0; font-size: 12px; border-radius: 3px 3px 0 0; }
.tabs .active { height: 22px; background: #fff; border-bottom: 0; }
.layers { list-style: none; height: calc(100% - 44px); padding: 2px 0 0 14px; border-left: 1px solid #a0a0a0; }
.layers li { position: relative; height: 16px; }
.layers .current::before { content: ""; position: absolute; left: -7px; top: 3px; border: 5px solid transparent; border-left-color: #4040f0; border-right: 0; }
.layers label { display: flex; align-items: center; height: 16px; }
.swatch { width: 14px; height: 12px; border: 1px solid #000; flex: none; }
.layers input {
  appearance: none;
  width: 13px;
  height: 13px;
  margin: 0 3px 0 1px;
  border: 1px solid #333;
  background: #fff url("data:image/svg+xml,%3Csvg xmlns='http://www.w3.org/2000/svg' width='11' height='11'%3E%3Cpath d='M1 5l3 3 6-6' fill='none' stroke='%23333' stroke-width='1.300'/%3E%3C/svg%3E") no-repeat center;
}
.c-red { background: #840000; }
.c-green { background: #008400; }
.c-purple { background: #840084; }
.c-navy { background: #000084; }
.c-cyan { background: #00c4c4; }
.c-teal { background: #008484; }
.c-olive { background: #848400; }
.c-silver { background: #c4c4c4; }
.c-yellow { background: #c4c400; }
.c-magenta { background: #c400c4; }
.c-gray { background: #848484; }

/* bottom bars */
.message-panel { flex: none; height: 32px; display: flex; gap: 30px; padding: 0 11px; border: solid #d8d8d8; border-width: 1px 0; }
.statusbar { flex: none; height: 22px; display: grid; grid-template-columns: 1fr 66px 171px 264px 196px 72px 182px; line-height: 22px; }
.statusbar span + span { padding-left: 4px; border-left: 1px solid #d8d8d8; }
.watermark { position: absolute; right: 81px; bottom: 89px; width: 300px; color: rgba(140, 140, 140, .6); white-space: nowrap; pointer-events: none; font-size: 14px; line-height: 22px; }
.watermark p:first-child { font-size: 19px; }

/* taskbar */
.taskbar { flex: none; height: 40px; display: flex; gap: 1px; background: linear-gradient(90deg, #1f302d, #24372f 50%, #2f4234); color: #fff; }
.taskbar > button { position: relative; width: 48px; display: grid; place-items: center; border-bottom: 2px solid transparent; }
.taskbar > button > svg { width: 24px; height: 24px; }
.taskbar > .open::after { content: ""; position: absolute; left: 4px; right: 4px; bottom: -2px; height: 2px; background: #67a6dc; }
.taskbar > .active { background: #51605d; }
.badge { position: absolute; right: 4px; bottom: 2px; width: 17px; height: 17px; border: 1px solid #aaa; border-radius: 50%; background: #333a3a; line-height: 15px; text-align: center; }
.tray { margin-left: auto; display: flex; align-items: center; font-size: 12px; line-height: 18px; text-align: center; }
.tray > button { width: 24px; display: grid; place-items: center; }
.tray svg { width: 16px; height: 16px; fill: none; stroke: #fff; }
.lang { width: 34px; }
.clock { width: 74px; }
.tray .clock + button { width: 36px; }
.peek { width: 5px; height: 40px; margin-left: 10px; border-left: 1px solid #78857c; }
```
